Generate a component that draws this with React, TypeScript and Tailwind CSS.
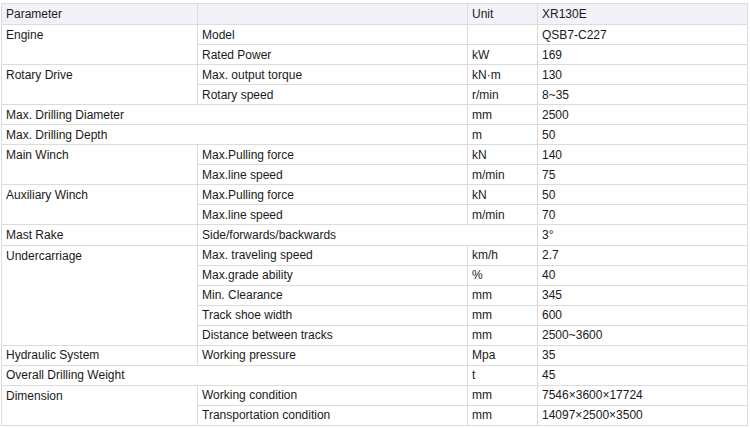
import React from "react";

const td = "border border-[#dcdcdc] px-[4px] py-0 h-[20.05px] align-middle text-left font-normal";
const tdTop = "border border-[#dcdcdc] px-[4px] py-0 h-[20.05px] align-top pt-[3px] text-left font-normal";
const th = "border border-[#dcdcdc] px-[4px] py-0 h-[21px] align-middle text-left font-normal";

export default function App() {
  return (
    <div className="w-[750px] h-[428px] bg-white pt-[3px] pl-[1px]" style={{ fontFamily: '"Liberation Sans", Arial, Helvetica, sans-serif' }}>
      <table className="border-collapse table-fixed w-[746px] text-[12px] leading-[14px] text-[#1a1a1a]">
        <colgroup>
          <col className="w-[196px]" />
          <col className="w-[270px]" />
          <col className="w-[70px]" />
          <col className="w-[210px]" />
        </colgroup>
        <tbody>
          <tr className="bg-[#f2f3f8]">
            <td className={th}>Parameter</td>
            <td className={th}></td>
            <td className={th}>Unit</td>
            <td className={th}>XR130E</td>
          </tr>
          <tr>
            <td className={tdTop} rowSpan={2}>Engine</td>
            <td className={td}>Model</td>
            <td className={td}></td>
            <td className={td}>QSB7-C227</td>
          </tr>
          <tr>
            <td className={td}>Rated Power</td>
            <td className={td}>kW</td>
            <td className={td}>169</td>
          </tr>
          <tr>
            <td className={tdTop} rowSpan={2}>Rotary Drive</td>
            <td className={td}>Max. output torque</td>
            <td className={td}>kN·m</td>
            <td className={td}>130</td>
          </tr>
          <tr>
            <td className={td}>Rotary speed</td>
            <td className={td}>r/min</td>
            <td className={td}>8~35</td>
          </tr>
          <tr>
            <td className={td} colSpan={2}>Max. Drilling Diameter</td>
            <td className={td}>mm</td>
            <td className={td}>2500</td>
          </tr>
          <tr>
            <td className={td} colSpan={2}>Max. Drilling Depth</td>
            <td className={td}>m</td>
            <td className={td}>50</td>
          </tr>
          <tr>
            <td className={tdTop} rowSpan={2}>Main Winch</td>
            <td className={td}>Max.Pulling force</td>
            <td className={td}>kN</td>
            <td className={td}>140</td>
          </tr>
          <tr>
            <td className={td}>Max.line speed</td>
            <td className={td}>m/min</td>
            <td className={td}>75</td>
          </tr>
          <tr>
            <td className={tdTop} rowSpan={2}>Auxiliary Winch</td>
            <td className={td}>Max.Pulling force</td>
            <td className={td}>kN</td>
            <td className={td}>50</td>
          </tr>
          <tr>
            <td className={td}>Max.line speed</td>
            <td className={td}>m/min</td>
            <td className={td}>70</td>
          </tr>
          <tr>
            <td className={td}>Mast Rake</td>
            <td className={td} colSpan={2}>Side/forwards/backwards</td>
            <td className={td}>3°</td>
          </tr>
          <tr>
            <td className={tdTop} rowSpan={5}>Undercarriage</td>
            <td className={td}>Max. traveling speed</td>
            <td className={td}>km/h</td>
            <td className={td}>2.7</td>
          </tr>
          <tr>
            <td className={td}>Max.grade ability</td>
            <td className={td}>%</td>
            <td className={td}>40</td>
          </tr>
          <tr>
            <td className={td}>Min. Clearance</td>
            <td className={td}>mm</td>
            <td className={td}>345</td>
          </tr>
          <tr>
            <td className={td}>Track shoe width</td>
            <td className={td}>mm</td>
            <td className={td}>600</td>
          </tr>
          <tr>
            <td className={td}>Distance between tracks</td>
            <td className={td}>mm</td>
            <td className={td}>2500~3600</td>
          </tr>
          <tr>
            <td className={td}>Hydraulic System</td>
            <td className={td}>Working pressure</td>
            <td className={td}>Mpa</td>
            <td className={td}>35</td>
          </tr>
          <tr>
            <td className={td} colSpan={2}>Overall Drilling Weight</td>
            <td className={td}>t</td>
            <td className={td}>45</td>
          </tr>
          <tr>
            <td className={tdTop} rowSpan={2}>Dimension</td>
            <td className={td}>Working condition</td>
            <td className={td}>mm</td>
            <td className={td}>7546×3600×17724</td>
          </tr>
          <tr>
            <td className={td}>Transportation condition</td>
            <td className={td}>mm</td>
            <td className={td}>14097×2500×3500</td>
          </tr>
        </tbody>
      </table>
    </div>
  );
}
